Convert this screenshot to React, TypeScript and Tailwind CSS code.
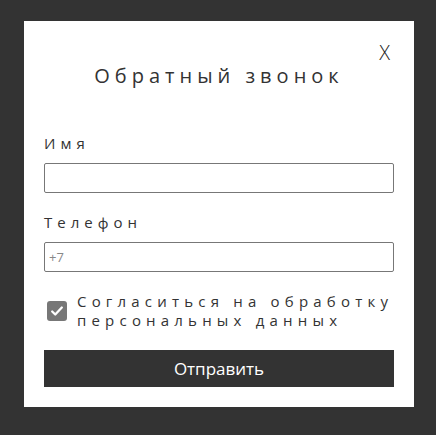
import type { FC } from 'react';

const font = { fontFamily: '"Open Sans", "Noto Sans", sans-serif' };

const Field: FC<{ label: string; placeholder?: string; className?: string }> = ({ label, placeholder, className }) => (
    <div className={className}>
        <label className="block text-[15px] leading-[18px] tracking-[5px] text-[#333]">{label}</label>
        <input
            className="mt-[11px] block h-[30px] w-full rounded-[2px] border border-[#777] bg-white px-[4px] text-[13px] text-[#333] outline-none placeholder:text-[#888]"
            placeholder={placeholder}
        />
    </div>
);

const App: FC = () => (
    <div className="h-[435px] w-[436px] bg-[#333] pl-[24px] pt-[21px]" style={font}>
        <div className="relative w-[390px] bg-white px-[20px] pb-[20px] pt-[43px]">
            <button className="absolute right-[24px] top-[19px] text-[20px] font-light leading-[26px] text-[#222]">X</button>

            <h2 className="text-center text-[20px] font-normal leading-[24px] tracking-[5px] text-[#333]">
                Обратный звонок
            </h2>

            <Field label="Имя" className="mt-[46px]" />
            <Field label="Телефон" placeholder="+7" className="mt-[20px]" />

            <div className="mt-[20px] flex items-center">
                <span className="ml-[3px] flex h-[20px] w-[20px] shrink-0 items-center justify-center rounded-[3px] bg-[#777]">
                    <svg viewBox="0 0 16 16" className="h-[14px] w-[14px]">
                        <path d="M2.5 8.5l3.5 3.5 7.5-8" fill="none" stroke="white" strokeWidth="2.6" strokeLinecap="round" strokeLinejoin="round" />
                    </svg>
                </span>
                <p className="ml-[10px] text-[15px] leading-[19px] tracking-[5.2px] text-[#333]">
                    Согласиться на обработку персональных данных
                </p>
            </div>

            <button className="mt-[20px] block h-[37px] w-full bg-[#333] text-[17px] text-white">Отправить</button>
        </div>
    </div>
);

export default App;
